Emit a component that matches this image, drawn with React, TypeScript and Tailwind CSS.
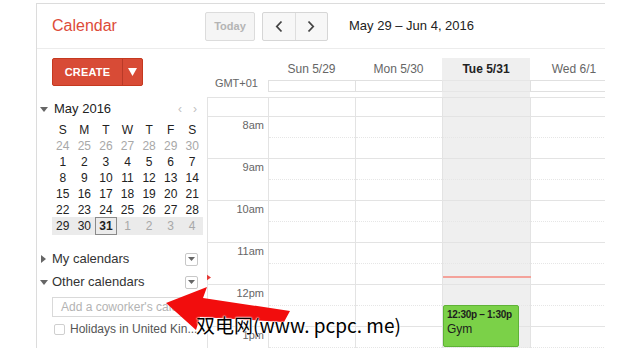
import React from "react";

type Day = { n: string; muted?: boolean; today?: boolean };

const weeks: Day[][] = [
  ["24", "25", "26", "27", "28", "29", "30"].map((n) => ({ n, muted: true })),
  ["1", "2", "3", "4", "5", "6", "7"].map((n) => ({ n })),
  ["8", "9", "10", "11", "12", "13", "14"].map((n) => ({ n })),
  ["15", "16", "17", "18", "19", "20", "21"].map((n) => ({ n })),
  ["22", "23", "24", "25", "26", "27", "28"].map((n) => ({ n })),
  [
    { n: "29" },
    { n: "30" },
    { n: "31", today: true },
    { n: "1", muted: true },
    { n: "2", muted: true },
    { n: "3", muted: true },
    { n: "4", muted: true },
  ],
];

const hours = ["8am", "9am", "10am", "11am", "12pm", "1pm"];

function DropBox() {
  return (
    <div className="flex h-[13px] w-[13px] items-center justify-center rounded-[2px] border border-[#c8c8c8] bg-white">
      <svg width="7" height="4" viewBox="0 0 7 4">
        <polygon points="0,0 7,0 3.5,4" fill="#666" />
      </svg>
    </div>
  );
}

function DayCells({ dotted }: { dotted: boolean }) {
  return (
    <>
      {[0, 1, 2, 3].map((i) => (
        <div
          key={i}
          className={`relative border-l border-[#e3e3e3] ${i === 2 ? "bg-[#efefef]" : ""}`}
        >
          {dotted && (
            <div className="absolute left-0 right-0 top-[20px] border-t border-dotted border-[#e6e6e6]" />
          )}
        </div>
      ))}
    </>
  );
}

export default function App() {
  return (
    <div className="relative h-[348px] w-[640px] overflow-hidden bg-white font-['Liberation_Sans',Arial,sans-serif] text-[#222]">
      <div className="ml-[36px] mt-[3px] w-[569px] border-l border-t border-[#dcdcdc]">
        {/* Header */}
        <div className="flex h-[45px] items-center border-b border-[#ececec]">
          <div className="w-[168px] pl-[15px] text-[16px] text-[#dd4b39]">Calendar</div>
          <div className="flex h-[29px] w-[50px] items-center justify-center rounded-[2px] border border-[#dcdcdc] bg-[#f5f5f5] text-[11px] font-bold text-[#b4b4b4]">
            Today
          </div>
          <div className="ml-[7px] flex h-[29px] w-[66px] rounded-[2px] border border-[#d6d6d6] bg-[#f7f7f7]">
            <div className="flex flex-1 items-center justify-center border-r border-[#dedede]">
              <svg width="8" height="13" viewBox="0 0 8 13">
                <polyline points="6.5,1.5 1.8,6.5 6.5,11.5" fill="none" stroke="#444" strokeWidth="1.8" />
              </svg>
            </div>
            <div className="flex flex-1 items-center justify-center">
              <svg width="8" height="13" viewBox="0 0 8 13">
                <polyline points="1.5,1.5 6.2,6.5 1.5,11.5" fill="none" stroke="#444" strokeWidth="1.8" />
              </svg>
            </div>
          </div>
          <div className="ml-[21px] text-[13px] text-[#222]">May 29 – Jun 4, 2016</div>
        </div>

        {/* Body */}
        <div className="flex">
          {/* Sidebar */}
          <div className="w-[170px] shrink-0 pl-[15px]">
            <div className="mt-[9px] flex h-[28px] w-[91px] rounded-[2px] border border-[#c5391f] bg-[#d84b36] text-white">
              <div className="flex flex-1 items-center justify-center text-[11px] font-bold tracking-[0.2px]">
                CREATE
              </div>
              <div className="flex w-[20px] items-center justify-center border-l border-[#b93a28]">
                <svg width="9" height="8" viewBox="0 0 9 8">
                  <polygon points="0,0 9,0 4.5,8" fill="#fff" />
                </svg>
              </div>
            </div>

            <div className="mt-[15px] flex h-[16px] w-[151px] items-center">
              <svg className="-ml-[12px] mr-[4px]" width="8" height="5" viewBox="0 0 8 5">
                <polygon points="0,0 8,0 4,5" fill="#666" />
              </svg>
              <span className="ml-[2px] text-[13px] text-[#222]">May 2016</span>
              <span className="ml-auto mr-[6px] flex gap-[11px] text-[12px] text-[#c0c0c0]">
                <span>‹</span>
                <span>›</span>
              </span>
            </div>

            <div className="mt-[4px] grid h-[16px] w-[151px] grid-cols-7 items-center text-center text-[12px] text-[#222]">
              {["S", "M", "T", "W", "T", "F", "S"].map((d, i) => (
                <div key={i}>{d}</div>
              ))}
            </div>

            {weeks.map((w, wi) => (
              <div
                key={wi}
                className={`grid w-[151px] grid-cols-7 items-center text-center text-[12px] ${
                  wi === 5 ? "h-[18px] bg-[#ebebeb]" : "h-[16px]"
                }`}
              >
                {w.map((d, di) => (
                  <div
                    key={di}
                    className={`${d.muted ? "text-[#a8a8a8]" : "text-[#222]"} ${
                      d.today ? "flex h-[18px] items-center justify-center border border-[#8a8a8a] font-bold" : ""
                    }`}
                  >
                    {d.n}
                  </div>
                ))}
              </div>
            ))}

            <div className="mt-[16px] flex h-[16px] w-[146px] items-center">
              <svg className="-ml-[11px] mr-[6px]" width="5" height="8" viewBox="0 0 5 8">
                <polygon points="0,0 5,4 0,8" fill="#666" />
              </svg>
              <span className="text-[13px] text-[#333]">My calendars</span>
              <span className="ml-auto">
                <DropBox />
              </span>
            </div>

            <div className="mt-[7px] flex h-[16px] w-[146px] items-center">
              <svg className="-ml-[12px] mr-[4px]" width="8" height="5" viewBox="0 0 8 5">
                <polygon points="0,0 8,0 4,5" fill="#666" />
              </svg>
              <span className="text-[13px] text-[#333]">Other calendars</span>
              <span className="ml-auto">
                <DropBox />
              </span>
            </div>

            <div className="mt-[7px] flex h-[20px] w-[148px] items-center overflow-hidden whitespace-nowrap border border-[#d9d9d9] bg-white pl-[8px] text-[12px] text-[#b3b3b3]">
              Add a coworker's calendar
            </div>

            <div className="mt-[6px] flex h-[12px] w-[150px] items-center">
              <div className="ml-[2px] h-[11px] w-[11px] rounded-[2px] border border-[#cfcfcf] bg-white" />
              <span className="ml-[5px] whitespace-nowrap text-[12px] text-[#555]">Holidays in United Kin...</span>
            </div>
          </div>

          {/* Grid */}
          <div className="w-[399px] overflow-hidden">
            <div className="w-[411px]">
              <div className="h-[9px]" />
              {/* Day headers */}
              <div className="grid h-[22px] grid-cols-[61px_87px_87px_88px_88px] items-center text-center text-[12px]">
                <div />
                <div className="text-[#666]">Sun 5/29</div>
                <div className="text-[#666]">Mon 5/30</div>
                <div className="flex h-full items-center justify-center bg-[#efefef] font-bold text-[#222]">Tue 5/31</div>
                <div className="text-[#666]">Wed 6/1</div>
              </div>
              {/* All day row */}
              <div className="grid h-[12px] grid-cols-[61px_87px_87px_88px_88px]">
                <div className="relative">
                  <span className="absolute right-[10px] top-[-5px] whitespace-nowrap text-[11px] text-[#666]">GMT+01</span>
                </div>
                <div className="border-y border-l border-[#e0e0e0]" />
                <div className="border-y border-l border-[#e0e0e0]" />
                <div className="border-y border-l border-[#e6e6e6] bg-[#efefef]" />
                <div className="border-y border-l border-[#e0e0e0]" />
              </div>
              <div className="grid h-[5px] grid-cols-[61px_87px_87px_88px_88px]">
                <div />
                <div />
                <div />
                <div className="bg-[#efefef]" />
                <div />
              </div>

              {/* Hours */}
              <div className="relative border-l border-t border-[#e3e3e3]">
                <div className="grid h-[18px] grid-cols-[60px_87px_87px_88px_88px]">
                  <div />
                  <DayCells dotted={false} />
                </div>
                {hours.map((h) => (
                  <div
                    key={h}
                    className="grid h-[42px] grid-cols-[60px_87px_87px_88px_88px] border-t border-[#e3e3e3]"
                  >
                    <div className="pr-[4px] pt-[1px] text-right text-[11px] leading-[14px] text-[#666]">{h}</div>
                    <DayCells dotted={true} />
                  </div>
                ))}

                {/* current time line */}
                <div className="absolute left-[235px] top-[178px] h-[2px] w-[88px] bg-[#f4a29a]" />
                <svg className="absolute left-[-2px] top-[176px]" width="5" height="7" viewBox="0 0 5 7">
                  <polygon points="0,0 5,3.5 0,7" fill="#e53935" />
                </svg>

                {/* Event */}
                <div className="absolute left-[235px] top-[207px] h-[42px] w-[76px] overflow-hidden rounded-[2px] border border-[#5fb336] bg-[#7bd148] pl-[3px] pt-[2px] text-[#1d1d1d]">
                  <div className="whitespace-nowrap text-[10px] font-bold leading-[14px] tracking-[-0.3px]">12:30p – 1:30p</div>
                  <div className="text-[12px] leading-[14px]">Gym</div>
                </div>
              </div>
            </div>
          </div>
        </div>
      </div>

      {/* Red arrow overlay */}
      <svg className="absolute left-0 top-0" width="640" height="348" viewBox="0 0 640 348">
        <polygon
          points="166,303 207,287 203,298 290,311 284,322 200,317 196,330"
          fill="#f20d0d"
        />
      </svg>

      {/* Watermark */}
      <div className="absolute left-[196px] top-[313px] whitespace-nowrap font-['Noto_Sans_CJK_SC','Noto_Sans',sans-serif] text-[19px] leading-[24px] text-black [text-shadow:0_0_2px_#fff,0_0_2px_#fff,0_0_1px_#fff]">
        双电网(www. pcpc. me)
      </div>
    </div>
  );
}
